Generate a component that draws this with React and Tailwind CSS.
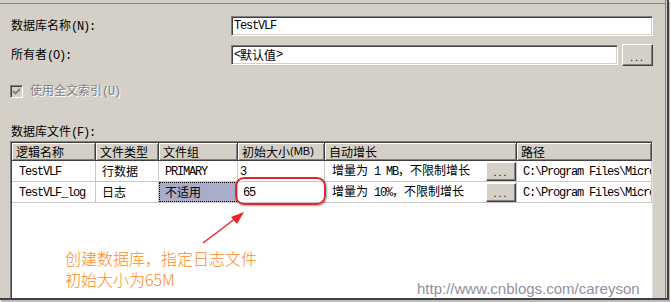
import React from "react";

const mono = "font-['Liberation_Mono','Noto_Sans_CJK_SC',monospace] tracking-[-1.2px]";

// SimSun-like: ASCII half-width in mono, CJK full-width
function Mixed({ text }) {
  const parts = text.split(/([\x20-\x7e]+)/).filter(Boolean);
  return parts.map((p, i) =>
    /^[\x20-\x7e]+$/.test(p) ? (
      <span key={i} className={mono}>
        {p}
      </span>
    ) : (
      <span key={i}>{p}</span>
    )
  );
}

function DotButton({ className = "" }) {
  return (
    <div
      className={`flex items-end justify-center pb-[3px] bg-[#d4d0c8] border border-t-white border-l-white border-r-[#404040] border-b-[#404040] shadow-[inset_-1px_-1px_0_#808080] text-[10px] leading-none tracking-[2px] ${className}`}
    >
      ...
    </div>
  );
}

function Field({ width, children }) {
  return (
    <div
      className={`${width} h-[20px] bg-white flex items-center pl-[2px] border border-t-[#808080] border-l-[#808080] border-r-white border-b-white shadow-[inset_1px_1px_0_#404040,inset_-1px_-1px_0_#d4d0c8]`}
    >
      {children}
    </div>
  );
}

const headers = ["逻辑名称", "文件类型", "文件组", "初始大小(MB)", "自动增长", "路径"];

const rows = [
  ["TestVLF", "行数据", "PRIMARY", "3", "增量为 1 MB，不限制增长", "C:\\Program Files\\Microsoft SQL Server"],
  ["TestVLF_log", "日志", "不适用", "65", "增量为 10%，不限制增长", "C:\\Program Files\\Microsoft SQL Server"],
];

const pads = ["pl-[7px]", "pl-[6px]", "pl-[6px]", "pl-[2px]", "pl-[7px]", "pl-[6px]"];

export default function App() {
  return (
    <div className="relative w-[671px] h-[302px] bg-white overflow-hidden font-['Noto_Sans_CJK_SC',sans-serif] text-[12px] text-black">
      <div className="w-[669px] h-[300px] border-r-2 border-b-2 border-[#404040] bg-[#d4d0c8] shadow-[1px_2px_0_#bdbdbd]">
        <div className="w-[666px] h-full border-r border-[#808080] pt-[3px]">
          <div className="h-full border-t border-[#808080] flex flex-col">
            <div className="mt-[12px] h-[20px] flex items-center pl-[11px]">
              <div className="w-[220px] leading-none">
                <Mixed text="数据库名称(N):" />
              </div>
              <Field width="w-[422px]">
                <Mixed text="TestVLF" />
              </Field>
            </div>

            <div className="mt-[8px] h-[22px] flex items-center pl-[11px]">
              <div className="w-[220px] leading-none">
                <Mixed text="所有者(O):" />
              </div>
              <Field width="w-[387px]">
                <Mixed text="<默认值>" />
              </Field>
              <DotButton className="ml-[4px] w-[31px] h-[22px]" />
            </div>

            <div className="mt-[18px] h-[14px] flex items-center pl-[10px] gap-[7px]">
              <div className="w-[13px] h-[13px] bg-[#d4d0c8] border border-t-[#808080] border-l-[#808080] border-r-white border-b-white shadow-[inset_1px_1px_0_#404040] flex items-center justify-center">
                <svg width="9" height="9" viewBox="0 0 9 9">
                  <path d="M1 4 L3.5 6.5 L8 2" stroke="#808080" strokeWidth="1.8" fill="none" />
                </svg>
              </div>
              <div className="text-[#808080] leading-none [text-shadow:1px_1px_0_#fff]">
                <Mixed text="使用全文索引(U)" />
              </div>
            </div>

            <div className="mt-[26px] h-[14px] pl-[11px] leading-[14px]">
              <Mixed text="数据库文件(F):" />
            </div>

            <div className="mt-[3px] ml-[10px] w-[643px] flex-1 border-l border-t border-r border-[#808080] border-r-[#e4e2dc]">
              <div className="h-full bg-white border-l border-t border-[#404040]">
                <div className="grid grid-cols-[84px_63px_79px_87px_192px_135px]">
                  {headers.map((h) => (
                    <div
                      key={h}
                      className="h-[18px] bg-[#d4d0c8] border-r border-b border-[#404040] shadow-[inset_1px_1px_0_#fff,inset_-1px_-1px_0_#808080] pl-[4px] flex items-center whitespace-nowrap overflow-hidden leading-none"
                    >
                      {h === "初始大小(MB)" ? (
                        <>
                          初始大小<span className="font-['Liberation_Sans',sans-serif] text-[11px]">(MB)</span>
                        </>
                      ) : (
                        h
                      )}
                    </div>
                  ))}
                  {rows.map((r, ri) =>
                    r.map((c, ci) => {
                      const selected = ri === 1 && ci === 2;
                      return (
                        <div
                          key={`${ri}-${ci}`}
                          className={`relative h-[21px] border-r border-b border-[#c8c8c8] flex items-center whitespace-nowrap overflow-hidden leading-none ${pads[ci]} ${selected ? "bg-[#a9adc9]" : "bg-white"} ${ci === 3 && ri === 1 ? "pl-[5px]" : ""}`}
                        >
                          {selected && (
                            <div className="absolute inset-0 border border-dotted border-black" />
                          )}
                          <span className="relative">
                            <Mixed text={c} />
                          </span>
                          {ci === 4 && (
                            <DotButton className="absolute right-0 bottom-0 w-[30px] h-[19px]" />
                          )}
                        </div>
                      );
                    })
                  )}
                </div>
              </div>
            </div>
          </div>
        </div>
      </div>

      <div className="absolute left-[235px] top-[177px] w-[91px] h-[28px] border-2 border-[#e3262c] rounded-[9px] shadow-[1px_1px_2px_rgba(0,0,0,0.35)]" />

      <svg className="absolute left-0 top-0 pointer-events-none" width="671" height="302">
        <line x1="203" y1="243" x2="236" y2="218" stroke="#e8262a" strokeWidth="1.5" />
        <polygon points="244,212 231,217 237,224" fill="#e8262a" />
      </svg>

      <div className="absolute left-[65px] top-[248px] text-[16px] leading-[21px] font-light text-[#ff8a1c]">
        <div>创建数据库，指定日志文件</div>
        <div>初始大小为65M</div>
      </div>

      <div className="absolute left-[417px] top-[280px] font-['Liberation_Sans',Arial,sans-serif] text-[15px] leading-[18px] text-[#9090a2]">
        http://www.cnblogs.com/careyson
      </div>
    </div>
  );
}
